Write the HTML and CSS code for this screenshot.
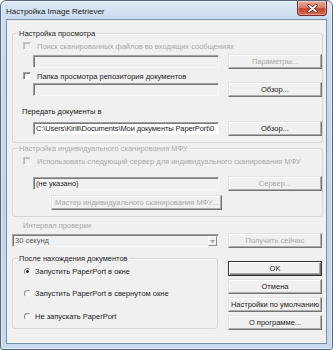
FILE: index.html
```html
<!DOCTYPE html>
<html lang="ru">
<head>
<meta charset="utf-8">
<title>Настройка Image Retriever</title>
<link rel="stylesheet" href="styles.css">
</head>
<body>
<div class="window">
  <div class="titlebar">
    <span class="title">Настройка Image Retriever</span>
    <div class="close">
      <svg width="11" height="9" viewBox="0 0 11 9">
        <path d="M2 1.5 L9 7.5 M9 1.5 L2 7.5" stroke="#5b1c12" stroke-width="3.2" stroke-linecap="round" fill="none"/>
        <path d="M2 1.5 L9 7.5 M9 1.5 L2 7.5" stroke="#ffffff" stroke-width="1.7" stroke-linecap="round" fill="none"/>
      </svg>
    </div>
  </div>
  <div class="client">
    <fieldset class="group g1">
      <legend>Настройка просмотра</legend>
      <div class="check disabled"><span class="cb"></span><span>Поиск сканированных файлов во входящих сообщениях</span></div>
      <div class="row r1"><div class="tb off"></div><div class="btn disabled">Параметры...</div></div>
      <div class="check c2"><span class="cb"></span><span>Папка просмотра репозитория документов</span></div>
      <div class="row"><div class="tb off"></div><div class="btn">Обзор...</div></div>
      <div class="label l1">Передать документы в</div>
      <div class="row r3"><div class="tb"><span class="val path">C:\Users\Kirill\Documents\Мои документы PaperPort\0</span></div><div class="btn">Обзор...</div></div>
    </fieldset>

    <fieldset class="group g2">
      <legend class="dis">Настройка индивидуального сканирования МФУ</legend>
      <div class="check disabled"><span class="cb"></span><span>Использовать следующий сервер для индивидуального сканирования МФУ</span></div>
      <div class="row r4"><div class="tb off"><span class="val">(не указано)</span></div><div class="btn disabled">Сервер...</div></div>
      <div class="btn disabled wizard">Мастер индивидуального сканирования МФУ...</div>
    </fieldset>

    <div class="label l2 dis">Интервал проверки</div>
    <div class="row r5">
      <div class="combo"><span class="val">30 секунд</span><span class="drop"><svg width="5" height="3" viewBox="0 0 5 3"><path d="M0 0 H5 L2.5 3 Z" fill="#a6a6a6"/></svg></span></div>
      <div class="btn disabled">Получить сейчас</div>
    </div>

    <div class="bottom">
      <fieldset class="group g3">
        <legend>После нахождения документов</legend>
        <div class="radio on"><span class="rb"></span><span>Запустить PaperPort в окне</span></div>
        <div class="radio ra2"><span class="rb"></span><span>Запустить PaperPort в свернутом окне</span></div>
        <div class="radio ra3"><span class="rb"></span><span>Не запускать PaperPort</span></div>
      </fieldset>
      <div class="buttons">
        <div class="btn default">OK</div>
        <div class="btn">Отмена</div>
        <div class="btn">Настройки по умолчанию</div>
        <div class="btn">О программе...</div>
      </div>
    </div>
  </div>
</div>
</body>
</html>
```
FILE: styles.css
```css
* { box-sizing: border-box; }
html, body { margin: 0; padding: 0; background: #ffffff; }
body {
  font-family: "Liberation Sans", Arial, sans-serif;
  font-size: 7.5px;
  color: #222;
}
.window {
  width: 333px;
  height: 350px;
  border: 1px solid #55677f;
  border-radius: 6px 6px 3px 3px;
  padding: 0 5px 5px 5px;
  background: linear-gradient(to bottom, #dce8f5 0, #cbdcef 18px, #bfd4ec 60%, #c6d9ee 100%);
  display: flex;
  flex-direction: column;
  box-shadow: inset 0 0 0 1px rgba(255,255,255,0.55);
}
.titlebar {
  height: 18px;
  flex: none;
  display: flex;
  align-items: flex-start;
  justify-content: space-between;
}
.title {
  font-size: 8px;
  color: #1b1b1b;
  padding-top: 6px;
  line-height: 9px;
}
.close {
  width: 30px;
  height: 15px;
  border: 1px solid #7a2a1e;
  border-top: none;
  border-radius: 0 0 4px 4px;
  background: linear-gradient(to bottom, #eab0a0 0, #dc7f68 45%, #c8452b 55%, #d36e53 100%);
  display: flex;
  align-items: center;
  justify-content: center;
  box-shadow: inset 0 0 0 1px rgba(255,255,255,0.35);
}
.client {
  flex: 1;
  border: 1px solid #7b8fa9;
  background: #f0f0f0;
  padding: 8px 3px 0 5px;
}
fieldset.group {
  margin: 0;
  padding: 1px 0 6px 0;
  border: 1px solid #d5d5d5;
  border-radius: 3px;
  min-width: 0;
  box-shadow: inset 1px 1px 0 #fbfbfb;
}
legend {
  padding: 0 1px;
  margin-left: 5px;
  height: 11px;
  line-height: 11px;
  color: #222;
}
.dis, .disabled { color: #a8a8a8; }

.check, .radio {
  height: 12px;
  display: flex;
  align-items: center;
  white-space: nowrap;
}
.check { padding-left: 10px; }
.cb {
  width: 8px;
  height: 8px;
  flex: none;
  margin-right: 6px;
  background: #ffffff;
  border: 1px solid;
  border-color: #a4a4a4 #fdfdfd #fdfdfd #a4a4a4;
  box-shadow: inset 1px 1px 0 #7a7a7a;
}
.check.disabled .cb {
  background: #f0f0f0;
  border-color: #c6c6c6 #fbfbfb #fbfbfb #c6c6c6;
  box-shadow: inset 1px 1px 0 #bcbcbc;
}
.row {
  height: 15px;
  display: flex;
  align-items: center;
  padding-left: 20px;
}
.r1 { margin-top: 2px; }
.c2 { margin-top: 1px; }
.tb {
  width: 186px;
  height: 13px;
  flex: none;
  background: #ffffff;
  border: 1px solid;
  border-color: #a0a0a0 #f7f7f7 #f7f7f7 #a0a0a0;
  box-shadow: inset 1px 1px 0 #7a7a7a;
  overflow: hidden;
  white-space: nowrap;
  display: flex;
  align-items: center;
  padding-left: 2px;
  color: #222;
}
.tb.off { background: #f0f0f0; }
.val { line-height: 11px; }
.path { letter-spacing: -0.12px; }
.btn {
  width: 94px;
  height: 15px;
  flex: none;
  margin-left: 9px;
  background: #f0f0f0;
  border: 1px solid;
  border-color: #e2e2e2 #747474 #747474 #e2e2e2;
  box-shadow: inset -1px -1px 0 #adadad, inset 1px 1px 0 #ffffff;
  display: flex;
  align-items: center;
  justify-content: center;
  white-space: nowrap;
  color: #222;
}
.btn.disabled { color: #a8a8a8; }
.btn.default {
  border-color: #333;
  box-shadow: inset 1px 1px 0 #ffffff, inset -1px -1px 0 #747474, inset -2px -2px 0 #adadad;
}
.label {
  height: 12px;
  line-height: 12px;
  white-space: nowrap;
}
.l1 { margin-top: 9px; padding-left: 9px; }
.r3 { margin-top: 3px; }

.g2 { margin-top: 4px; padding-top: 2px; padding-bottom: 3px; }
.r4 { margin-top: 9px; }
.wizard { width: 171px; margin-left: 38px; margin-top: 4px; }

.l2 { margin-top: 3px; padding-left: 11px; }
.r5 { margin-top: 1px; padding-left: 0; }
.combo {
  width: 207px;
  height: 13px;
  flex: none;
  background: #f0f0f0;
  border: 1px solid;
  border-color: #a0a0a0 #f7f7f7 #f7f7f7 #a0a0a0;
  box-shadow: inset 1px 1px 0 #7a7a7a;
  display: flex;
  align-items: center;
  padding-left: 2px;
  color: #5a5a5a;
}
.drop {
  margin-left: auto;
  width: 9px;
  height: 10px;
  margin-right: 1px;
  margin-top: 1px;
  background: #f0f0f0;
  border: 1px solid;
  border-color: #f8f8f8 #8a8a8a #8a8a8a #f8f8f8;
  display: flex;
  align-items: center;
  justify-content: center;
}

.bottom {
  margin-top: 5px;
  display: flex;
  align-items: flex-start;
}
.g3 { width: 206px; flex: none; padding-top: 6px; padding-bottom: 3px; }
.radio { padding-left: 11px; }
.ra2 { margin-top: 10px; }
.ra3 { margin-top: 11px; }
.rb {
  width: 7px;
  height: 7px;
  flex: none;
  margin-right: 4px;
  border-radius: 50%;
  border: 1px solid;
  border-color: #8a8a8a #f6f6f6 #f6f6f6 #8a8a8a;
  background: #ffffff;
}
.radio.on .rb {
  background: radial-gradient(circle, #222 0, #222 1.1px, #ffffff 1.7px);
}
.buttons {
  margin-left: 10px;
  margin-top: 8px;
  display: flex;
  flex-direction: column;
  gap: 3px;
}
.buttons .btn { margin-left: 0; }
```
